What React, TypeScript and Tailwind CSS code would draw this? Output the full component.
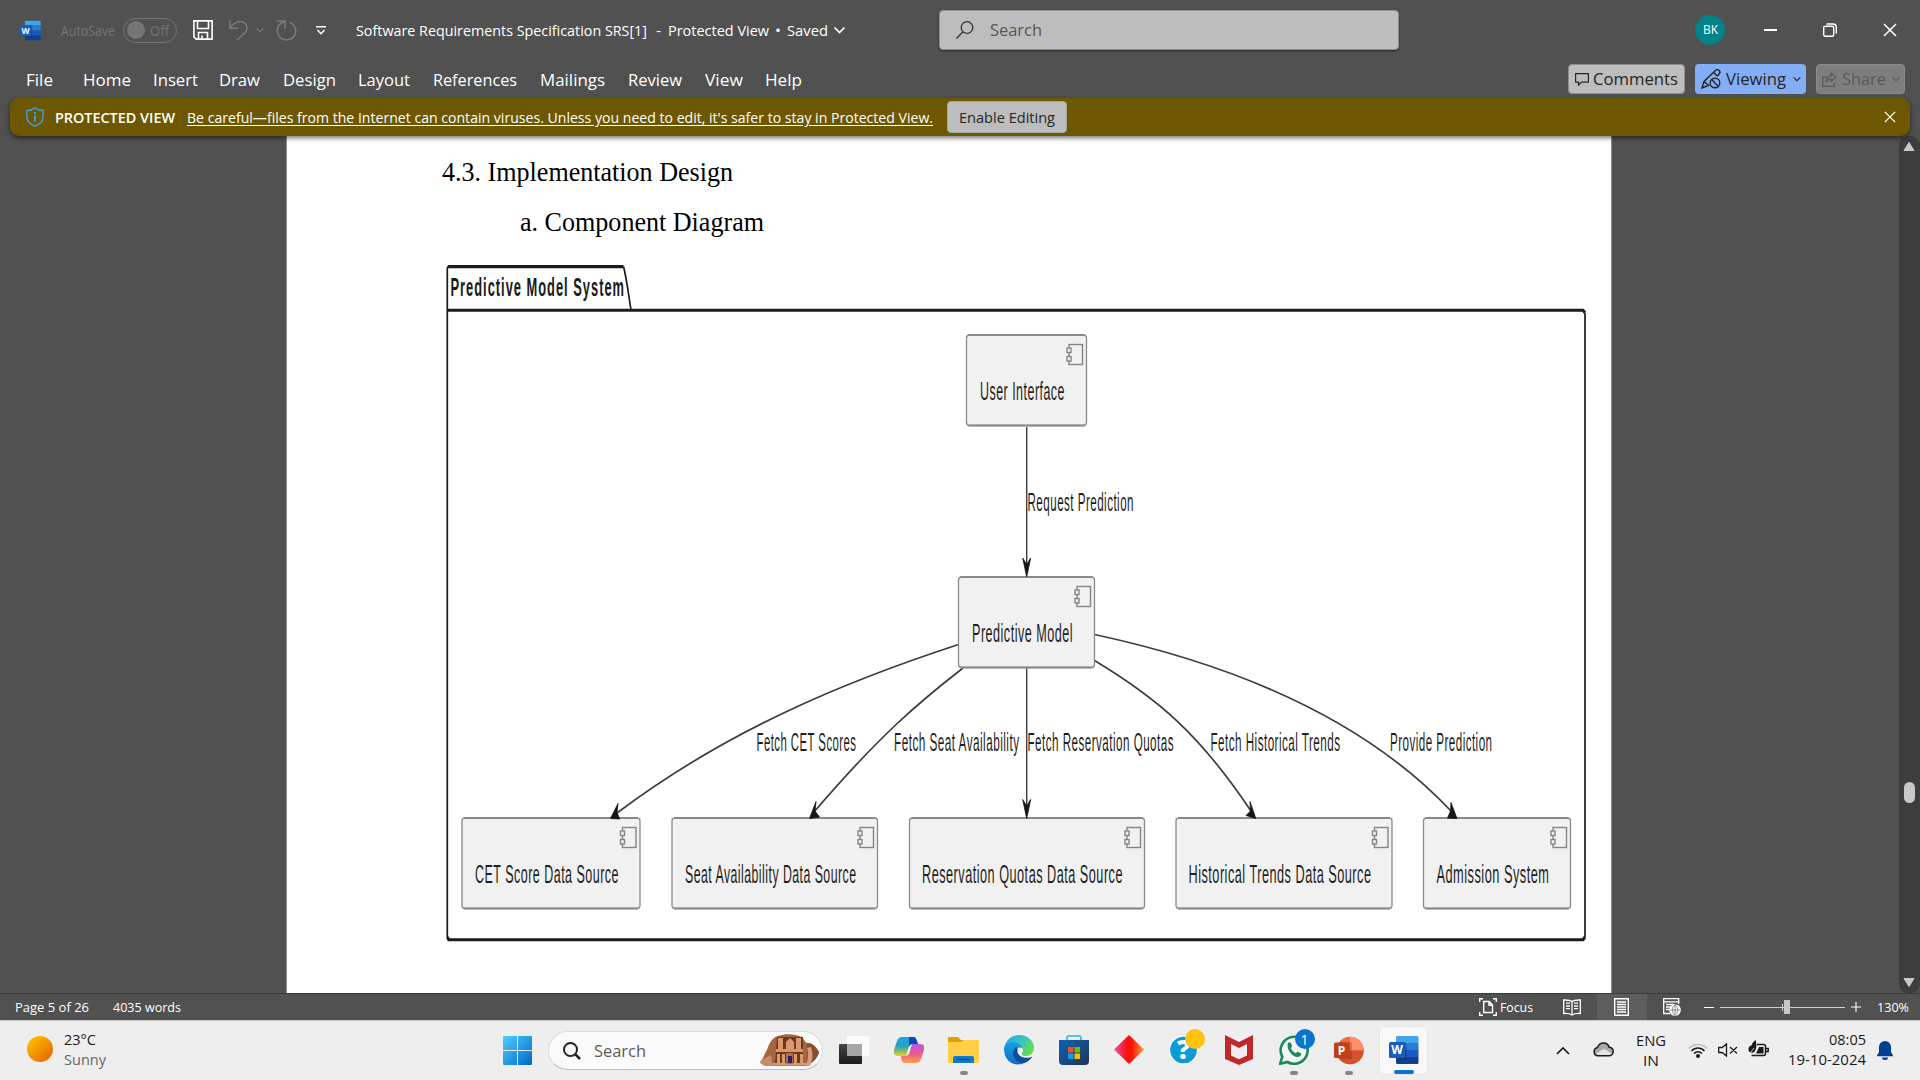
import React, { useLayoutEffect, useRef } from "react";

/* One line of text, condensed or widened to fill the width of its box. */
function Fit({ className = "", children }: { className?: string; children: React.ReactNode }) {
  const box = useRef<HTMLSpanElement>(null);
  const text = useRef<HTMLSpanElement>(null);
  useLayoutEffect(() => {
    if (!box.current || !text.current) return;
    text.current.style.transform = "none";
    const k = box.current.getBoundingClientRect().width / text.current.getBoundingClientRect().width;
    text.current.style.transform = `scaleX(${k})`;
  });
  return (
    <span ref={box} className={"block shrink-0 whitespace-nowrap " + className}>
      <span ref={text} className="block w-max origin-left">{children}</span>
    </span>
  );
}

function Chevron({ className = "" }: { className?: string }) {
  return (
    <svg viewBox="0 0 12 8" className={"shrink-0 " + className} fill="none" stroke="currentColor">
      <path d="M1 1.5l5 5 5-5" strokeWidth="1.7" />
    </svg>
  );
}

function WordLogo({ className }: { className: string }) {
  return (
    <svg viewBox="0 0 30 30" className={"shrink-0 " + className}>
      <path d="M8.5 1H28a1.5 1.5 0 0 1 1.500 1.500V8H7V2.500A1.500 1.500 0 0 1 8.500 1z" fill="#41a5ee" />
      <path d="M7 8h22.500v7H7z" fill="#2b7cd3" />
      <path d="M7 15h22.500v7H7z" fill="#185abd" />
      <path d="M7 22h22.500v5.500A1.500 1.500 0 0 1 28 29H8.500A1.500 1.500 0 0 1 7 27.500z" fill="#103f91" />
      <path d="M7 7h9a1.500 1.500 0 0 1 1.500 1.500V24H7z" fill="#0a2a5c" opacity=".4" />
      <rect x="0" y="7" width="16" height="16" rx="1.500" fill="#1b5bbe" />
      <text x="8" y="19.300" textAnchor="middle" fontFamily="Open Sans" fontWeight="700" fontSize="12" fill="#fff">W</text>
    </svg>
  );
}

function CloseIcon({ className }: { className: string }) {
  return (
    <svg viewBox="0 0 14 14" className={"shrink-0 " + className} fill="none" stroke="#fff" strokeWidth="1.5">
      <path d="M1 1l12 12M13 1L1 13" />
    </svg>
  );
}

function TitleBar() {
  return (
    <div className="flex h-[60px] items-center text-[15px] text-white">
      <WordLogo className="ml-5 h-[21px] w-[21px]" />
      <Fit className="ml-[20px] w-[54px] text-[14px] text-[#757575]">AutoSave</Fit>
      <div className="ml-[8px] flex h-[25px] w-[54px] items-center rounded-full border border-[#757575] text-[#757575]">
        <span className="ml-[3px] h-[18px] w-[18px] rounded-full bg-[#757575]" />
        <Fit className="ml-[5px] w-[19px] text-[14px]">Off</Fit>
      </div>
      <svg className="ml-[16px] h-[20px] w-[20px] shrink-0" viewBox="0 0 20 20" fill="none" stroke="#fff" strokeWidth="1.600">
        <path d="M.9.900h18.200v18.200H3.200L.9 16.800z" />
        <path d="M4.500 1v7.500h11V1M5.500 19v-6.500h9V19M9 19v-3.500" />
      </svg>
      <svg className="ml-[16px] h-[20px] w-[19px] shrink-0" viewBox="0 0 19 20" fill="none" stroke="#7a7a7a" strokeWidth="1.500">
        <path d="M.8 0v8.300h8M1 8.200C4 4 7 1.500 11 1.500c4 0 7 2.700 7 6.300 0 2.300-1 4-2.500 5.500L8 20" />
      </svg>
      <Chevron className="ml-[8px] h-[6px] w-[8px] text-[#7a7a7a]" />
      <svg className="ml-[12px] h-[21px] w-[21px] shrink-0" viewBox="0 0 21 21" fill="none" stroke="#7a7a7a" strokeWidth="1.500">
        <path d="M1 .900h8v8M8.500 1.500C4 3 1.300 6.500 1.300 11c0 5 4 9 9.200 9s9.200-4 9.200-9c0-4-2.400-7.200-6-8.500" />
      </svg>
      <svg className="ml-[19px] h-[9px] w-[10px] shrink-0" viewBox="0 0 10 9" fill="none" stroke="#fff" strokeWidth="1.400">
        <path d="M0 .8h10M1.500 4L5 7.700 8.500 4" />
      </svg>
      <Fit className="ml-[30px] w-[291px]">Software Requirements Specification SRS[1]</Fit>
      <Fit className="ml-[9px] w-[5px]">-</Fit>
      <Fit className="ml-[7px] w-[101px]">Protected View</Fit>
      <Fit className="ml-[6px] w-[6px]">•</Fit>
      <Fit className="ml-[6px] w-[41px]">Saved</Fit>
      <Chevron className="ml-[5px] h-[8px] w-[13px]" />
      <div className="ml-[93px] flex h-[40px] w-[460px] items-center rounded-[4px] border border-[#8f8f8f] bg-[#bdbdbd] shadow-[0_1px_2px_rgba(0,0,0,0.5)]">
        <svg className="ml-[16px] h-[18px] w-[18px]" viewBox="0 0 18 18" fill="none" stroke="#333" strokeWidth="1.300">
          <circle cx="11" cy="6.500" r="5.800" />
          <path d="M7 10.800L.5 17.500" />
        </svg>
        <Fit className="ml-[16px] w-[52px] text-[17px] leading-[22px] text-[#555] mb-px">Search</Fit>
      </div>
      <div className="ml-[296px] flex h-[30px] w-[30px] items-center justify-center rounded-full bg-[#038387]">
        <Fit className="w-[15px] text-[12px]">BK</Fit>
      </div>
      <span className="ml-[39px] h-[1.500px] w-[13px] bg-white" />
      <svg className="ml-[46px] h-[14px] w-[14px] shrink-0" viewBox="0 0 14 14" fill="none" stroke="#fff" strokeWidth="1.400">
        <rect x=".7" y="3.200" width="10" height="10" rx="1.500" />
        <path d="M3.500 1h6.500a3.300 3.300 0 0 1 3.300 3.300v6.200" />
      </svg>
      <CloseIcon className="ml-[46px] h-[14px] w-[14px]" />
    </div>
  );
}

const tabs: [string, string][] = [
  ["File", "ml-[26px] w-[27px]"],
  ["Home", "ml-[30px] w-[48px]"],
  ["Insert", "ml-[22px] w-[45px]"],
  ["Draw", "ml-[21px] w-[41px]"],
  ["Design", "ml-[23px] w-[53px]"],
  ["Layout", "ml-[22px] w-[52px]"],
  ["References", "ml-[23px] w-[84px]"],
  ["Mailings", "ml-[23px] w-[65px]"],
  ["Review", "ml-[23px] w-[54px]"],
  ["View", "ml-[23px] w-[38px]"],
  ["Help", "ml-[22px] w-[37px]"],
];

function Ribbon() {
  return (
    <div className="flex h-[38px] items-center text-[17px] text-white">
      <div className="flex pt-[2px]">
        {tabs.map(([t, c]) => (
          <Fit key={t} className={c}>{t}</Fit>
        ))}
      </div>
      <div className="ml-auto mr-[15px] flex gap-[10px] text-[#262626]">
        <div className="flex h-[30px] w-[117px] items-center rounded-[4px] border border-[#8e8e8e] bg-[#bdbdbd]">
          <svg className="ml-[6px] h-[13px] w-[14px]" viewBox="0 0 14 13" fill="none" stroke="currentColor" strokeWidth="1.200">
            <path d="M.6.600h12.800v8.600H6.500L3.500 12.200v-3H.6z" />
          </svg>
          <Fit className="ml-[4px] w-[85px]">Comments</Fit>
        </div>
        <div className="flex h-[30px] w-[111px] items-center rounded-[4px] bg-[#83adf5]">
          <svg className="ml-[6px] h-[20px] w-[20px]" viewBox="0 0 20 20" fill="none" stroke="currentColor" strokeWidth="1.400">
            <path d="M8.500 16L1 19l2-6.500L14.500 1.500c1-1 2.600-1 3.600 0s1 2.500 0 3.500L16 7.500M12.500 3.500l4 3.500M3 12.500l4 3.500" />
            <circle cx="14" cy="14" r="4.800" />
            <path d="M10.600 10.600l6.800 6.800" />
          </svg>
          <Fit className="ml-[5px] w-[60px]">Viewing</Fit>
          <Chevron className="ml-[7px] h-[6px] w-[8px]" />
        </div>
        <div className="flex h-[30px] w-[89px] items-center rounded-[4px] border border-[#8b8b8b] bg-[#7e7e7e] text-[#5a5a5a]">
          <svg className="ml-[5px] h-[15px] w-[15px]" viewBox="0 0 15 15" fill="none" stroke="currentColor" strokeWidth="1.300">
            <path d="M4.500 5H.700v9.300h11.600v-3.500M9 1l5 4.200-5 4.200V7.200c-2.500 0-4 .8-5 3.300.2-4 2-6.500 5-6.700z" />
          </svg>
          <Fit className="ml-[5px] w-[44px]">Share</Fit>
          <Chevron className="ml-[6px] h-[6px] w-[8px]" />
        </div>
      </div>
    </div>
  );
}

function Banner() {
  return (
    <div className="relative z-10 mx-[10px] flex h-[38px] shrink-0 items-center rounded-[9px] bg-[#6d5700] text-[15px] text-white shadow-[0_2px_5px_rgba(0,0,0,0.55)]">
      <svg className="ml-[16px] h-[20px] w-[18px] shrink-0" viewBox="0 0 18 20" fill="none" stroke="#3f9bd8" strokeWidth="1.500">
        <path d="M9 .900c2 1.700 4.800 2.500 8.100 2.600v5.800c0 5-3 8-8.100 9.900C3.900 17.300.9 14.300.9 9.300V3.500C4.200 3.400 7 2.600 9 .900z" />
        <path d="M9 5v2.200M9 8.500v6.200" strokeWidth="2" />
      </svg>
      <Fit className="ml-[11px] w-[120px] font-semibold">PROTECTED VIEW</Fit>
      <Fit className="ml-[12px] w-[746px] underline underline-offset-2">
        Be careful—files from the Internet can contain viruses. Unless you need to edit, it's safer to stay in Protected View.
      </Fit>
      <div className="ml-[14px] flex h-[32px] w-[120px] items-center justify-center rounded-[4px] border border-[#a5a5a5] bg-[#bdbdbd] pr-px text-[#262626]">
        <Fit className="w-[96px]">Enable Editing</Fit>
      </div>
      <CloseIcon className="ml-auto mr-[14px] h-[12px] w-[12px]" />
    </div>
  );
}

/* ---------- component diagram ---------- */

const nodes = [
  { x: 966.5, r: 1086.5, y: 335, t: "User Interface", tx: 980, tr: 1065 },
  { x: 958.5, r: 1094.5, y: 577, t: "Predictive Model", tx: 972, tr: 1073 },
  { x: 462, r: 640, y: 818, t: "CET Score Data Source", tx: 475, tr: 619 },
  { x: 672, r: 877.5, y: 818, t: "Seat Availability Data Source", tx: 685, tr: 856.5 },
  { x: 909.5, r: 1144.500, y: 818, t: "Reservation Quotas Data Source", tx: 922, tr: 1123 },
  { x: 1176, r: 1392, y: 818, t: "Historical Trends Data Source", tx: 1188.5, tr: 1371.5 },
  { x: 1423.500, r: 1570.500, y: 818, t: "Admission System", tx: 1436.5, tr: 1549.5 },
];

const labels = [
  { t: "Request Prediction", x: 1027.5, r: 1134, y: 510.5 },
  { t: "Fetch CET Scores", x: 756.5, r: 856.5, y: 751 },
  { t: "Fetch Seat Availability", x: 894, r: 1019.500, y: 751 },
  { t: "Fetch Reservation Quotas", x: 1027.5, r: 1174, y: 751 },
  { t: "Fetch Historical Trends", x: 1210.5, r: 1340.5, y: 751 },
  { t: "Provide Prediction", x: 1390, r: 1492.500, y: 751 },
];

const edges = [
  "M958.500 644.500C850 680 730 728 617 813",
  "M963 668C918 703 880 735 814 812",
  "M1094.500 660.500C1160 700 1200 735 1251 811",
  "M1094.500 634.500C1250 668 1370 725 1451 811",
];

const heads = [
  "M1026.700 577l-4-19 4 6.500 4-6.500z",
  "M1026.700 818.500l-4-19 4 6.500 4-6.500z",
  "M610.500 818.500L618 803.500 617 812.500 619.700 819z",
  "M809.500 818.500L816 801.500 815 811 819.500 817z",
  "M1255.800 818.500L1250 801.500 1250.500 811 1246 815.500z",
  "M1457 818.500L1451 802.500 1450.500 811 1447.500 818z",
];

function Diagram() {
  return (
    <svg className="block h-[690px] w-[1150px]" viewBox="440 255 1150 690" fontFamily="Liberation Sans, sans-serif" fontSize="26">
      <g fill="none" stroke="#1c1c1c">
        <path d="M447.300 937V269a3 3 0 0 1 1-2.500M1585 937V313" strokeWidth="1.700" />
        <path d="M448 266.700H623.500" strokeWidth="3.300" />
        <path d="M623.500 266.500C627 280 629 298 631 310" strokeWidth="1.700" />
        <path d="M447 310.300H1583l2 2.500M447.300 937l1.500 2.700H1583l2-2.700" strokeWidth="3" />
      </g>
      <text x="450.500" y="295.500" fontWeight="700" letterSpacing="2" textLength="174.500" lengthAdjust="spacingAndGlyphs" fill="#1a1a1a">Predictive Model System</text>
      <g fill="none" stroke="#3c3c3c" strokeWidth="1.700">
        <path d="M1026.700 427V566M1026.700 668V808" strokeWidth="1.400" />
        {edges.map((d) => <path key={d} d={d} />)}
      </g>
      {nodes.map((n) => (
        <g key={n.t}>
          <rect x={n.x} y={n.y} width={n.r - n.x} height="90.500" rx="3" fill="#f1f1f1" stroke="#8a8a8a" strokeWidth="1.300" />
          <path d={`M${n.x + 2} ${n.y}H${n.r - 2}M${n.x + 2} ${n.y + 90.5}H${n.r - 2}`} stroke="#8a8a8a" strokeWidth="2.200" />
          <g fill="#f1f1f1" stroke="#858585" strokeWidth="1.400">
            <rect x={n.r - 17.500} y={n.y + 9.500} width="13.500" height="20" />
            <rect x={n.r - 19.500} y={n.y + 13} width="4" height="4.500" />
            <rect x={n.r - 19.500} y={n.y + 21.500} width="4" height="4.500" />
          </g>
          <text x={n.tx} y={n.y + 64.500} letterSpacing="1" textLength={n.tr - n.tx} lengthAdjust="spacingAndGlyphs" fill="#1f1f1f">{n.t}</text>
        </g>
      ))}
      {labels.map((l) => (
        <text key={l.t} x={l.x} y={l.y} fontSize="25.500" letterSpacing="1" textLength={l.r - l.x} lengthAdjust="spacingAndGlyphs" fill="#1f1f1f">{l.t}</text>
      ))}
      {heads.map((d) => <path key={d} d={d} fill="#151515" stroke="#151515" strokeWidth=".8" />)}
    </svg>
  );
}

function Workspace() {
  return (
    <div className="flex h-[857px] bg-[#515151]">
      <div className="ml-[286px] w-[1326px] overflow-hidden border-x border-[#8d8d8d] bg-white font-['Liberation_Serif',serif] text-[26.600px] text-black">
        <Fit className="ml-[155px] mt-[21px] h-[30px] w-[291px] leading-[30px]">4.3. Implementation Design</Fit>
        <Fit className="ml-[233px] mt-[20px] h-[30px] w-[244px] leading-[30px]">a. Component Diagram</Fit>
        <div className="ml-[153px] mt-[18px]">
          <Diagram />
        </div>
      </div>
      <div className="ml-auto flex w-[21px] flex-col items-center rounded-t-[9px] rounded-b-[9px] bg-[#3d3d3d]">
        <svg className="mr-px mt-[6px] h-[9px] w-[12px]" viewBox="0 0 12 9"><path d="M6 .500L11 8.500H1z" fill="#c8c8c8" stroke="#c8c8c8" strokeLinejoin="round" /></svg>
        <div className="mr-px mt-[631px] h-[21px] w-[11px] rounded-full bg-[#c8c8c8]" />
        <svg className="mb-[6px] mr-px mt-auto h-[9px] w-[12px]" viewBox="0 0 12 9"><path d="M6 8.500L1 .500h10z" fill="#c8c8c8" stroke="#c8c8c8" strokeLinejoin="round" /></svg>
      </div>
    </div>
  );
}

function StatusBar() {
  return (
    <div className="flex h-[27px] items-center border-t border-[#3a3a3a] bg-[#515151] text-[13.300px] text-white">
      <Fit className="ml-[15px] w-[74px] pt-px">Page 5 of 26</Fit>
      <Fit className="ml-[24px] w-[68px] pt-px">4035 words</Fit>
      <svg className="ml-[1298px] h-[18px] w-[18px] shrink-0" viewBox="0 0 18 18" fill="none" stroke="#fff" strokeWidth="1.400">
        <path d="M4 .700H.700V4M14 .700h3.300V4M4 17.300H.700V14M14 17.300h3.300V14M4.700 3.500h5.500l3.300 3.500v7.500H4.700zM10 3.500V7.200h3.500" />
      </svg>
      <Fit className="ml-[3px] w-[33px] pt-px">Focus</Fit>
      <svg className="ml-[30px] h-[17px] w-[18px] shrink-0" viewBox="0 0 18 17" fill="none" stroke="#fff" strokeWidth="1.300">
        <path d="M9 2.500C7 1 4 .900.700 1v13.500C4 14.300 7 14.500 9 16c2-1.500 5-1.700 8.300-1.500V1C14 .900 11 1 9 2.500zM9 2.500V16M3 4.200h4M3 7h4M3 9.700h4M11 4.200h4M11 7h4M11 9.700h4" />
      </svg>
      <div className="ml-[16px] flex h-[26px] w-[50px] items-center justify-center bg-[#5d5d5d] pr-px">
        <svg className="h-[18px] w-[15px]" viewBox="0 0 15 18" fill="none" stroke="#fff" strokeWidth="1.400">
          <path d="M.700.700h13.600v16.600H.700zM3 4h9M3 6.500h9M3 9h9M3 11.500h9M3 14h9" />
        </svg>
      </div>
      <svg className="ml-[16px] h-[18px] w-[18px] shrink-0" viewBox="0 0 18 18" fill="none" stroke="#fff" strokeWidth="1.300">
        <path d="M7 15.500H.700V.700h15V6M.700 3.800h15M3 6.500h8M3 9h4M3 11.500h3" />
        <circle cx="12" cy="12" r="5.200" fill="#fff" />
        <path d="M7 12h10M12 7v10" stroke="#666" strokeWidth=".7" />
        <ellipse cx="12" cy="12" rx="2.400" ry="5" stroke="#666" strokeWidth=".7" />
      </svg>
      <span className="ml-[23px] h-px w-[10px] bg-white" />
      <div className="ml-[6px] flex h-[14px] w-[125px] items-center">
        <span className="h-px w-[62px] bg-[#d0d0d0]" />
        <span className="h-[7px] w-px bg-[#d0d0d0]" />
        <span className="h-px w-px bg-[#d0d0d0]" />
        <span className="h-[14px] w-[6px] bg-[#c8c8c8]" />
        <span className="h-px flex-1 bg-[#d0d0d0]" />
      </div>
      <svg className="ml-[6px] h-[10px] w-[10px] shrink-0" viewBox="0 0 10 10" stroke="#fff" strokeWidth="1.100"><path d="M0 5h10M5 0v10" /></svg>
      <Fit className="ml-[16px] w-[32px] pt-px">130%</Fit>
    </div>
  );
}

/* ---------- taskbar ---------- */

function Petra() {
  return (
    <svg className="h-[33px] w-[60px] shrink-0" viewBox="0 0 60 33">
      <path d="M0 28c4-4 4-8 7-12C9 9 13 3 18 2c8-3 18-2 24 1 2 2 3 5 5 6 6 0 9 4 12 9-1 6-7 11-12 14H8c-4 0-7-2-8-4z" fill="#a4663f" />
      <path d="M47 9c6 0 9 4 12 9-1 6-7 11-12 14z" fill="#8a4f31" />
      <path d="M47 14c2 4 1 12-1 18h4c3-6 3-13 1-19z" fill="#d79a80" />
      <path d="M0 28c4-3 8-6 11-7l2 11H8c-4 0-7-2-8-4z" fill="#c98a70" />
      <path d="M17 3h26v28H15z" fill="#6b3820" />
      <path d="M18 4h5v11h-5zM36 4h5v11h-5zM26 8l4-4 4 4v7h-8zM16 15h27v3H16zM17 20h3v10h-3zM22 20h3v10h-3zM34 20h3v10h-3zM40 20h3v10h-3zM13 29h34v2.500H13z" fill="#d9996c" />
      <path d="M26 19h7v11h-7z" fill="#b06f4c" />
      <path d="M28 22h4v7h-4z" fill="#26206a" />
    </svg>
  );
}

function TaskCell({ dot, children }: { dot?: boolean; children: React.ReactNode }) {
  return (
    <div className="flex h-[60px] w-[55px] shrink-0 flex-col items-center">
      <div className="mt-[5px] flex h-[48px] w-[48px] items-center justify-center pt-px">{children}</div>
      {dot && <span className="-mt-[3px] h-[4px] w-[8px] rounded-full bg-[#868686]" />}
    </div>
  );
}

function Taskbar() {
  return (
    <div className="flex h-[60px] items-center border-t border-[#c9c9c9] bg-[#eeeeee] text-[#1b1b1b]">
      <div className="mb-[3px] ml-[27px] h-[26px] w-[26px] shrink-0 rounded-full bg-linear-to-br from-[#fdc900] to-[#e25a00]" />
      <div className="mb-[4px] ml-[11px] flex w-[60px] flex-col text-[15px] leading-[20px]">
        <Fit className="w-[32px]">23°C</Fit>
        <Fit className="w-[42px] text-[#666]">Sunny</Fit>
      </div>
      <svg className="ml-[379px] h-[29px] w-[29px] shrink-0" viewBox="0 0 29 29">
        <defs><linearGradient id="win" x1="0" y1="0" x2="1" y2="1"><stop offset="0" stopColor="#4fd0ff" /><stop offset="1" stopColor="#0067c8" /></linearGradient></defs>
        <path d="M1 0h13v14H0V1a1 1 0 0 1 1-1zM15 0h13a1 1 0 0 1 1 1v13H15zM0 15h14v14H1a1 1 0 0 1-1-1zM15 15h14v13a1 1 0 0 1-1 1H15z" fill="url(#win)" />
      </svg>
      <div className="ml-[16px] flex h-[39px] w-[275px] shrink-0 items-center rounded-full border border-[#dcdcdc] border-b-[#bdbdbd] bg-[#fafafa]">
        <svg className="ml-[14px] h-[18px] w-[18px] shrink-0" viewBox="0 0 18 18" fill="none" stroke="#222" strokeWidth="2"><circle cx="7.500" cy="7.500" r="6.500" /><path d="M12.200 12.200L17 17" strokeWidth="2.500" /></svg>
        <Fit className="ml-[13px] w-[52px] text-[17px] text-[#5c5c5c]">Search</Fit>
        <div className="ml-auto mr-[2px]"><Petra /></div>
      </div>
      <div className="ml-[3px] flex">
        <TaskCell>
          <svg className="h-[29px] w-[30px]" viewBox="0 0 30 29">
            <defs><linearGradient id="tv" x1="0" y1="0" x2="0" y2="1"><stop offset="0" stopColor="#454545" /><stop offset="1" stopColor="#1c1c1c" /></linearGradient></defs>
            <rect x="0" y="8" width="23" height="20" rx="1" fill="url(#tv)" />
            <rect x="8" y="0" width="22" height="20" rx="1" fill="#fff" opacity=".75" />
            <path d="M8 8h15v12H8z" fill="#999" opacity=".75" />
          </svg>
        </TaskCell>
        <TaskCell>
          <svg className="h-[28px] w-[30px]" viewBox="0 0 30 28">
            <defs>
              <linearGradient id="cpa" x1="0" y1="0" x2="0" y2="1"><stop offset="0" stopColor="#18a0f0" /><stop offset=".5" stopColor="#2aa4b8" /><stop offset="1" stopColor="#e8d020" /></linearGradient>
              <linearGradient id="cpb" x1="0" y1="0" x2="0" y2="1"><stop offset="0" stopColor="#b05ce8" /><stop offset=".5" stopColor="#f0568c" /><stop offset="1" stopColor="#ffa04a" /></linearGradient>
            </defs>
            <path d="M8 1h11c2 0 3 1 3.500 3L24 8h-5c-3 0-4 2-5 5l-2 7H4c-3 0-5-2-4-6L3 5c1-3 3-4 5-4z" fill="url(#cpa)" />
            <path d="M15 1h4c2 0 3 1 3.500 3L24 8h-5c-2 0-3 .500-4 2z" fill="#1542c5" />
            <path d="M22 27H11c-2 0-3-1-3.500-3L7 20h4c3 0 4-2 5-5l2-7h8c3 0 5 2 4 6l-3 9c-1 3-3 4-5 4z" fill="url(#cpb)" />
          </svg>
        </TaskCell>
        <TaskCell dot>
          <svg className="h-[28px] w-[31px]" viewBox="0 0 31 28">
            <path d="M0 2a1 1 0 0 1 1-1h9l3 3h17v8H0z" fill="#dfa000" />
            <path d="M0 6h13l3-2h14a1 1 0 0 1 1 1v21a1 1 0 0 1-1 1H1a1 1 0 0 1-1-1z" fill="#ffcf48" />
            <path d="M5 27v-5a2 2 0 0 1 2-2h17a2 2 0 0 1 2 2v5z" fill="#0f7bd0" />
            <path d="M9 23.500h13" stroke="#0b5196" strokeWidth="1.500" />
          </svg>
        </TaskCell>
        <TaskCell>
          <svg className="h-[30px] w-[30px]" viewBox="0 0 30 30">
            <defs>
              <linearGradient id="e1" x1="0" y1="0" x2="1" y2=".5"><stop offset="0" stopColor="#2aa5e0" /><stop offset=".6" stopColor="#35c6c0" /><stop offset="1" stopColor="#66dc50" /></linearGradient>
              <linearGradient id="e2" x1="0" y1="0" x2="0" y2="1"><stop offset="0" stopColor="#1ba0e2" /><stop offset="1" stopColor="#1268c8" /></linearGradient>
            </defs>
            <path d="M0 14C1 5 8 0 15 0c9 0 15 6 15 13 0 5-4 8-8 8-3 0-5-1-4-3 2-2 1-6-3-7z" fill="url(#e1)" />
            <path d="M0 14C1 9 5 7 9 7c5 0 9 3 9 6-5-2-8 3-6 8 2 4 6 6 10 6-9 6-22 1-22-13z" fill="url(#e2)" />
            <path d="M12 12c-6 6-2 16 8 16 4-1 7-4 8.500-6.500-4 2-13 2.500-15-4.500 0-2 .500-4-1.500-5z" fill="#104f98" />
          </svg>
        </TaskCell>
        <TaskCell>
          <svg className="h-[30px] w-[30px]" viewBox="0 0 30 30">
            <defs><linearGradient id="st" x1="0" y1="0" x2="1" y2="1"><stop offset="0" stopColor="#0b63b0" /><stop offset="1" stopColor="#243358" /></linearGradient></defs>
            <path d="M8 6V2.500A1.500 1.500 0 0 1 9.500 1h11A1.500 1.500 0 0 1 22 2.500V6" fill="none" stroke="#29b5ee" strokeWidth="1.600" />
            <path d="M0 5h30v21a4 4 0 0 1-4 4H4a4 4 0 0 1-4-4z" fill="url(#st)" />
            <path d="M9 12h5.500v5.500H9z" fill="#f25022" /><path d="M15.500 12H21v5.500h-5.500z" fill="#7fba00" />
            <path d="M9 18.500h5.500V24H9z" fill="#00a4ef" /><path d="M15.500 18.500H21V24h-5.500z" fill="#ffb900" />
          </svg>
        </TaskCell>
        <TaskCell>
          <svg className="mb-px h-[29px] w-[30px]" viewBox="0 0 30 29">
            <defs><linearGradient id="rd" x1="0" y1="0" x2="1" y2="0"><stop offset="0" stopColor="#f04ca8" /><stop offset=".45" stopColor="#f8100c" /><stop offset=".6" stopColor="#fb1408" /><stop offset="1" stopColor="#ffa23a" /></linearGradient></defs>
            <path d="M15 0l15 14.500L15 29 0 14.500z" fill="url(#rd)" />
          </svg>
        </TaskCell>
        <TaskCell>
          <div className="relative">
            <svg className="h-[30px] w-[30px]" viewBox="0 0 30 30">
              <circle cx="14.500" cy="15" r="14" fill="#0d9ad6" stroke="#fff" strokeWidth="1.300" />
              <text x="14.500" y="24" textAnchor="middle" fontFamily="Open Sans" fontWeight="800" fontSize="26" fill="#fff">?</text>
            </svg>
            <span className="absolute left-[16px] top-[-6px] h-[20px] w-[20px] rounded-full bg-[#fec20f]" />
          </div>
        </TaskCell>
        <TaskCell>
          <svg className="h-[30px] w-[28px]" viewBox="0 0 28 30">
            <path d="M0 0l14 7L28 0v24l-14 6-14-6zM6 9v11.500l8 3.700 8-3.700V9l-8 4z" fill="#c1282d" fillRule="evenodd" />
          </svg>
        </TaskCell>
        <TaskCell dot>
          <div className="relative">
            <svg className="h-[30px] w-[30px]" viewBox="0 0 30 30">
              <path d="M1.300 28.700l2-7A13.500 13.500 0 1 1 8.500 27z" fill="#f5f5f5" stroke="#1b8a56" strokeWidth="2.600" />
              <path d="M9 8c1-1 2.500-.800 3 .300l1 2.700c.2.800-.800 1.600-1.200 2.200 1 2.300 2.700 4 5 5 .800-.500 1.500-1.700 2.300-1.300l2.700 1.400c.800.500.400 2-.400 2.800-5.500 4-15-6-12.400-13.100z" fill="#1b8a56" />
            </svg>
            <span className="absolute left-[16px] top-[-6px] flex h-[20px] w-[20px] items-center justify-center rounded-full bg-[#0a74cf] text-[14px] text-white">1</span>
          </div>
        </TaskCell>
        <TaskCell dot>
          <svg className="h-[29px] w-[30px]" viewBox="0 0 30 29">
            <circle cx="16" cy="14.500" r="13.700" fill="#ed6c47" />
            <path d="M16 .800a13.700 13.700 0 0 1 13.700 13.700H16z" fill="#ff8f6b" />
            <path d="M2.300 14.500h27.400a13.700 13.700 0 0 1-27.400 0z" fill="#d35230" />
            <path d="M5 6h11a2 2 0 0 1 2 2v15H5z" fill="#7a2410" opacity=".3" />
            <rect x="0" y="6.500" width="15.500" height="15.500" rx="1.500" fill="#c43e1c" />
            <text x="7.500" y="18.500" textAnchor="middle" fontFamily="Open Sans" fontWeight="700" fontSize="12" fill="#fff">P</text>
          </svg>
        </TaskCell>
        <div className="ml-[3px] mt-[5px] flex h-[49px] w-[49px] shrink-0 flex-col items-center rounded-[5px] border border-[#e6e6e6] bg-[#f8f8f8]">
          <WordLogo className="mt-[8px] h-[30px] w-[30px]" />
          <span className="mt-auto h-[4px] w-[20px] rounded-full bg-[#0a74cf]" />
        </div>
      </div>
      <svg className="ml-[128px] h-[8px] w-[14px] shrink-0" viewBox="0 0 14 8" fill="none" stroke="currentColor" strokeWidth="1.700"><path d="M1 7l6-6 6 6" /></svg>
      <svg className="ml-[23px] mb-[2px] h-[15px] w-[21px] shrink-0" viewBox="0 0 21 15">
        <path d="M5 13.800a4.200 4.200 0 0 1-.500-8.300C5.500 2.500 8 .900 10.500.900c3 0 5 1.800 5.700 4.400 2.300.200 4 1.900 4 4.200s-1.800 4.300-4.200 4.300z" fill="#a8a8a8" />
        <path d="M2 12.500l8-5.200 3 .5 6.500 4.200c-.8 1-2 1.800-3.500 1.800H5c-1.200 0-2.300-.5-3-1.300z" fill="#e4e4e4" />
        <path d="M5 13.800a4.200 4.200 0 0 1-.500-8.300C5.500 2.500 8 .900 10.500.900c3 0 5 1.800 5.700 4.400 2.300.200 4 1.900 4 4.200s-1.800 4.300-4.200 4.300z" fill="none" stroke="#1b1b1b" strokeWidth="1.500" />
      </svg>
      <div className="mb-[2px] ml-[22px] flex w-[30px] flex-col items-center text-[15px] leading-[20px]">
        <Fit className="w-[30px]">ENG</Fit>
        <Fit className="w-[16px]">IN</Fit>
      </div>
      <svg className="ml-[22px] h-[15px] w-[20px] shrink-0" viewBox="0 0 20 15" fill="none" strokeWidth="1.500">
        <path d="M.700 5.500c5.200-5.500 13.400-5.500 18.600 0" stroke="#bdbdbd" />
        <path d="M3.500 8c3.700-4 9.300-4 13 0M6 10.500c2.300-2.500 5.700-2.500 8 0" stroke="#1b1b1b" />
        <circle cx="10" cy="13" r="2" fill="#1b1b1b" />
      </svg>
      <svg className="mb-px ml-[10px] h-[14px] w-[20px] shrink-0" viewBox="0 0 20 14" fill="none" stroke="#1b1b1b" strokeWidth="1.300">
        <path d="M.700 4.500h3.500L8.500.900v12.200L4.200 9.500H.700zM12 4l7 6.500M19 4l-7 6.500" />
      </svg>
      <svg className="mb-[4px] ml-[10px] h-[17px] w-[21px] shrink-0" viewBox="0 0 21 17" fill="none" stroke="#1b1b1b" strokeWidth="1.500">
        <path d="M9 4.500h6.500a2 2 0 0 1 2 2v7a2 2 0 0 1-2 2h-12M18 8.500h2.200v3H18" />
        <path d="M11 7h4.500v6.500H8z" fill="#1b1b1b" stroke="none" />
        <path d="M7.500 0c1 3 1.500 8-.5 11-1.500 2.500-4.500 2-6 .500C-.5 8 1.500 5.500 3.500 5.500c.500-2 2-4 4-5.500z" fill="#1b1b1b" stroke="none" />
        <path d="M1 14.500l5-6.500" stroke="#eee" strokeWidth=".8" />
      </svg>
      <div className="mb-[4px] ml-[19px] flex w-[78px] flex-col items-end text-[15px] leading-[20px]">
        <Fit className="w-[37px]">08:05</Fit>
        <Fit className="w-[78px]">19-10-2024</Fit>
      </div>
      <svg className="ml-[11px] h-[19px] w-[16px] shrink-0" viewBox="0 0 16 19">
        <path d="M8 0a6 6 0 0 1 6 6v5l2 3.500v.700H0v-.700L2 11V6a6 6 0 0 1 6-6zM5 16.500h6a3 2.500 0 0 1-6 0z" fill="#003f91" />
      </svg>
    </div>
  );
}

export default function App() {
  return (
    <div className="flex h-[1080px] w-[1920px] flex-col overflow-hidden bg-[#515151] font-['Open_Sans','Noto_Sans',sans-serif]">
      <TitleBar />
      <Ribbon />
      <Banner />
      <Workspace />
      <StatusBar />
      <Taskbar />
    </div>
  );
}
